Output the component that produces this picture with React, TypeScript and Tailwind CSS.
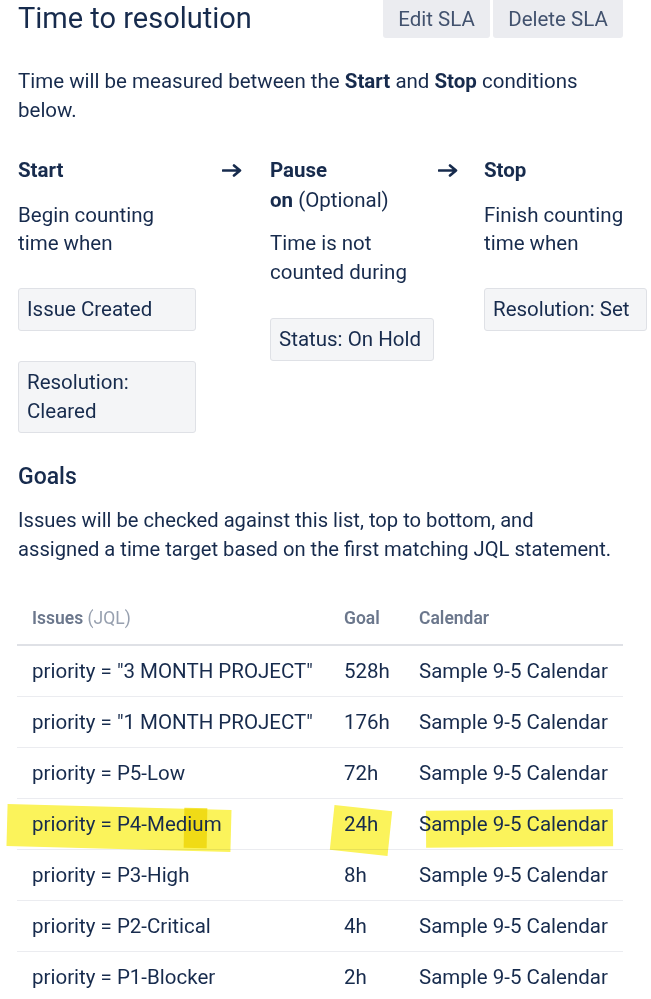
import React from "react";

const Arrow = () => (
  <svg width="20" height="14" viewBox="0 0 20 14" fill="none" className="shrink-0">
    <path d="M1 7.5H17.5M12 2.5L18 7.5L12 12.5" stroke="#172b4d" strokeWidth="2.6" strokeLinecap="round" strokeLinejoin="round" />
  </svg>
);

const Box = ({ children }: { children: React.ReactNode }) => (
  <div className="rounded-[3px] border border-[#dfe1e6] bg-[#f4f5f7] px-2 py-[6px] text-[20.5px] leading-[29px]">
    {children}
  </div>
);

const rows = [
  ['priority = "3 MONTH PROJECT"', "528h"],
  ['priority = "1 MONTH PROJECT"', "176h"],
  ["priority = P5-Low", "72h"],
  ["priority = P4-Medium", "24h"],
  ["priority = P3-High", "8h"],
  ["priority = P2-Critical", "4h"],
  ["priority = P1-Blocker", "2h"],
];

export default function App() {
  return (
    <div
      className="w-[651px] h-[999px] overflow-hidden bg-white text-[#172b4d] pl-[18px]"
      style={{ fontFamily: "Roboto, 'Noto Sans', sans-serif" }}
    >
      {/* header */}
      <div className="flex h-[38px] w-[605px] items-center justify-between">
        <h1 className="text-[29px] leading-[34px] font-normal -mt-[3px]">Time to resolution</h1>
        <div className="flex h-[38px] gap-[3px]">
          <button className="h-[38px] w-[107px] rounded-b-[3px] bg-[#ebecf0] text-[20.5px] text-[#42526e]">Edit SLA</button>
          <button className="h-[38px] w-[130px] rounded-b-[3px] bg-[#ebecf0] text-[20.5px] text-[#42526e]">Delete SLA</button>
        </div>
      </div>

      <p className="mt-[29px] w-[600px] text-[20.5px] leading-[29px]">
        Time will be measured between the <span className="font-bold">Start</span> and <span className="font-bold">Stop</span> conditions
        <br />
        below.
      </p>

      {/* columns */}
      <div className="mt-[30px] flex w-[633px] items-start">
        <div className="w-[178px] shrink-0">
          <div className="text-[20.5px] leading-[30px] font-bold">Start</div>
          <div className="mt-[16px] text-[20.5px] leading-[28px]">Begin counting time when</div>
          <div className="mt-[31px] flex flex-col gap-[30px]">
            <Box>Issue Created</Box>
            <Box>Resolution: Cleared</Box>
          </div>
        </div>
        <div className="w-[74px] shrink-0 pl-[26px] pt-[8px]">
          <Arrow />
        </div>
        <div className="w-[166px] shrink-0">
          <div className="text-[20.5px] leading-[30px]">
            <span className="font-bold">Pause</span>
            <br />
            <span className="font-bold">on</span> (Optional)
          </div>
          <div className="mt-[14px] text-[20.5px] leading-[29px]">Time is not counted during</div>
          <div className="mt-[31px] w-[164px]">
            <Box>Status: On Hold</Box>
          </div>
        </div>
        <div className="w-[48px] shrink-0 pl-[2px] pt-[8px]">
          <Arrow />
        </div>
        <div className="w-[163px] shrink-0">
          <div className="text-[20.5px] leading-[30px] font-bold">Stop</div>
          <div className="mt-[16px] text-[20.5px] leading-[28px]">Finish counting time when</div>
          <div className="mt-[31px]">
            <Box>Resolution: Set</Box>
          </div>
        </div>
      </div>

      <h2 className="mt-[29px] text-[23px] leading-[30px] font-medium">Goals</h2>
      <p className="mt-[14px] w-[620px] text-[20.2px] leading-[29px]">
        Issues will be checked against this list, top to bottom, and
        <br />
        assigned a time target based on the first matching JQL statement.
      </p>

      {/* table */}
      <div className="mt-[29px] -ml-px w-[606px]">
        <div className="grid h-[53px] grid-cols-[312px_75px_219px] items-center border-b-2 border-[#dfe1e6] text-[17.5px] text-[#6b778c]">
          <div className="pl-[15px]">
            <span className="font-semibold">Issues</span> <span className="text-[#97a0af]">(JQL)</span>
          </div>
          <div className="pl-[15px] font-semibold">Goal</div>
          <div className="pl-[15px] font-semibold">Calendar</div>
        </div>
        {rows.map(([q, g], i) => {
          const hl = i === 3;
          return (
            <div
              key={i}
              className={`relative grid h-[51px] grid-cols-[312px_75px_219px] items-center text-[20.5px] ${i < rows.length - 1 ? "border-b border-[#ebecf0]" : ""}`}
            >
              {hl && (
                <>
                  <div className="absolute left-[-10px] top-[8px] h-[42px] w-[224px] rotate-[1.5deg] bg-[#fbf35b] mix-blend-multiply" />
                  <div className="absolute left-[167px] top-[9px] h-[40px] w-[23px] rotate-[1deg] bg-[#f4e63c] mix-blend-multiply" />
                  <div className="absolute left-[315px] top-[9px] h-[45px] w-[58px] rotate-[6deg] bg-[#fbf35b] mix-blend-multiply" />
                  <div className="absolute left-[409px] top-[11px] h-[37px] w-[187px] rotate-[-0.5deg] bg-[#fbf35b] mix-blend-multiply" />
                </>
              )}
              <div className="relative pl-[15px] whitespace-nowrap">{q}</div>
              <div className="relative pl-[15px]">{g}</div>
              <div className="relative pl-[15px] whitespace-nowrap">Sample 9-5 Calendar</div>
            </div>
          );
        })}
      </div>
    </div>
  );
}
